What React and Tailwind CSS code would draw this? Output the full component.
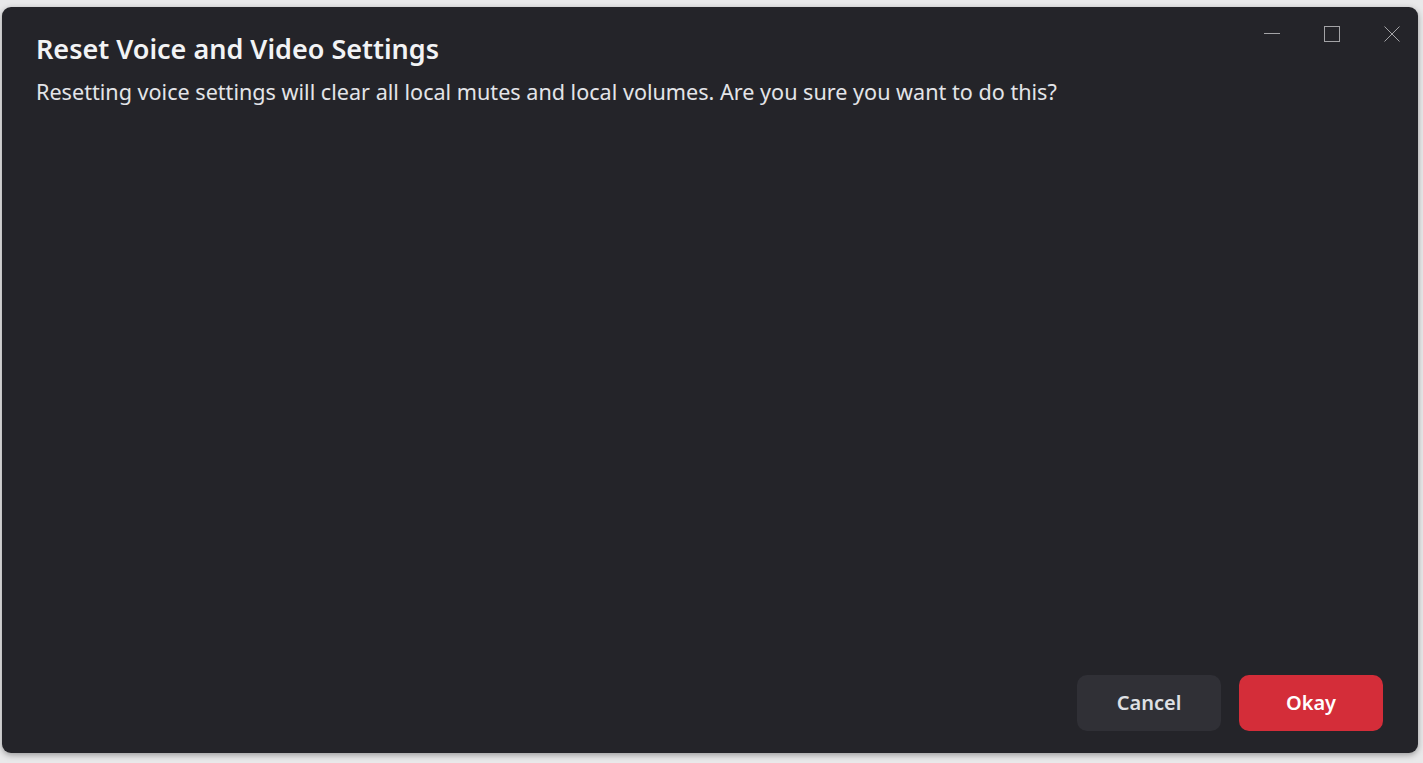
import React from "react";

const FONT = { fontFamily: '"Noto Sans", "Open Sans", sans-serif' };

function WindowControls() {
  return (
    <div className="absolute top-[19px] right-[18px] flex items-center gap-[44px]">
      <button className="w-4 h-4 flex">
        <svg width="16" height="16" viewBox="0 0 16 16">
          <line x1="0" y1="7.5" x2="16" y2="7.5" stroke="#a3a3a6" strokeWidth="1" />
        </svg>
      </button>
      <button className="w-4 h-4 flex">
        <svg width="16" height="16" viewBox="0 0 16 16">
          <rect x="0.5" y="0.5" width="15" height="15" fill="none" stroke="#a3a3a6" strokeWidth="1" />
        </svg>
      </button>
      <button className="w-4 h-4 flex">
        <svg width="16" height="16" viewBox="0 0 16 16">
          <path d="M0.5 0.5 L15.5 15.5 M15.5 0.5 L0.5 15.5" stroke="#a3a3a6" strokeWidth="1" />
        </svg>
      </button>
    </div>
  );
}

export default function App() {
  return (
    <div className="h-[763px] w-[1423px] overflow-hidden bg-[#e9e9ea] pt-[7px] pl-[2px]" style={FONT}>
      {/* dialog window */}
      <div className="relative w-[1416px] h-[746px] rounded-[9px] bg-[#242429] shadow-[0_2px_6px_rgba(0,0,0,0.35)] flex flex-col pl-[34px] pr-[35px] pt-[25px] pb-[22px]">
        <WindowControls />

        <h1 className="text-[27px] leading-[34px] font-semibold text-[#f2f3f5]">
          Reset Voice and Video Settings
        </h1>
        <p className="mt-[12px] text-[21.6px] leading-[28px] text-[#e3e4e8]">
          Resetting voice settings will clear all local mutes and local volumes. Are you sure you want to do this?
        </p>

        <div className="mt-auto flex justify-end gap-[18px]">
          <button className="w-[144px] h-[56px] rounded-[10px] bg-[#303036] text-[20px] font-semibold text-[#dfe0e4]">
            Cancel
          </button>
          <button className="w-[144px] h-[56px] rounded-[10px] bg-[#d42d39] text-[20px] font-semibold text-white">
            Okay
          </button>
        </div>
      </div>
    </div>
  );
}
